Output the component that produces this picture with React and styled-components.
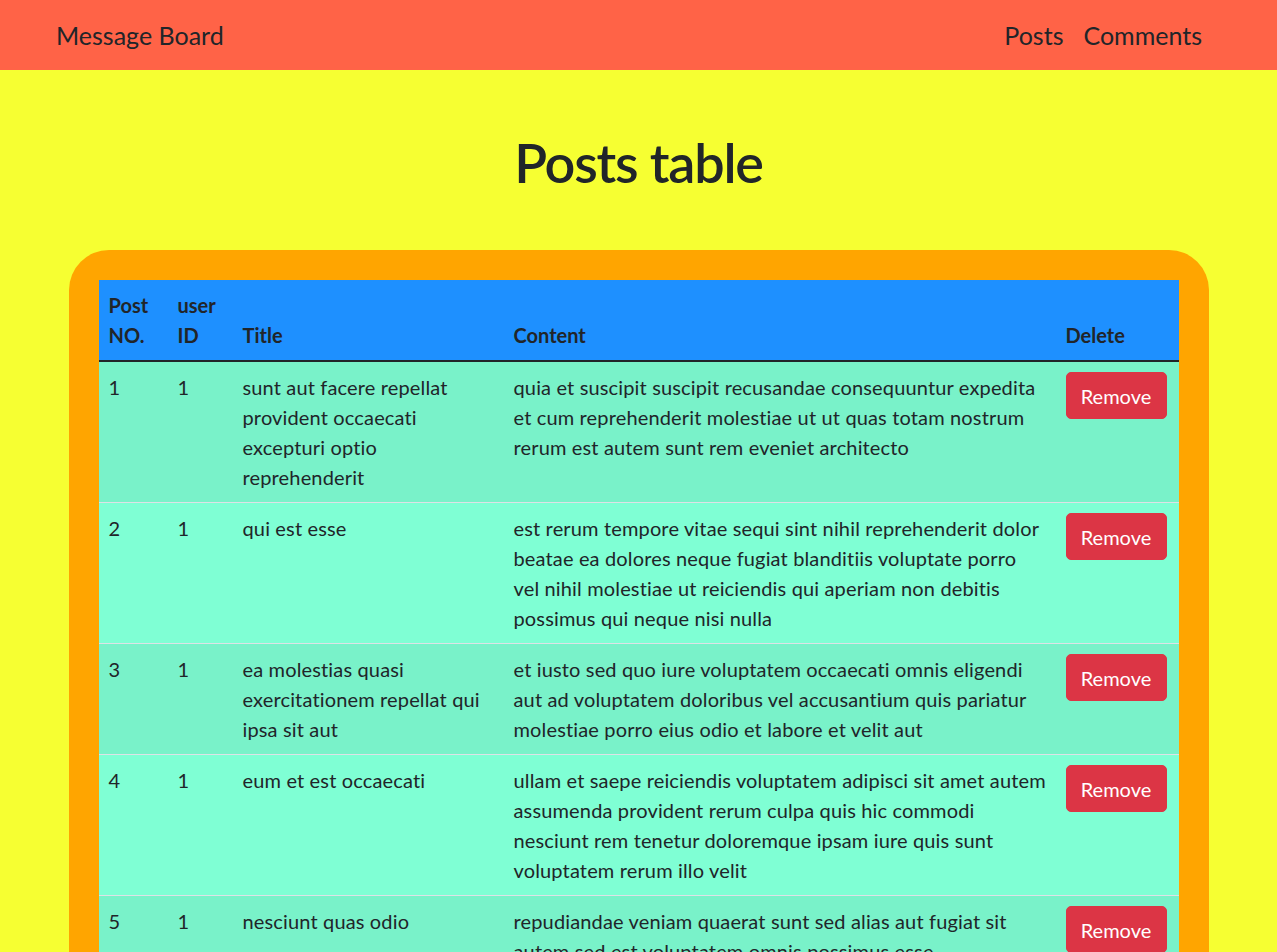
import React from 'react';
import styled, { createGlobalStyle } from 'styled-components';

const GlobalStyle = createGlobalStyle`
  html, body {
    margin: 0;
    padding: 0;
  }
  body {
    background: #f6ff32;
    color: #212529;
    font-family: Lato, "Liberation Sans", sans-serif;
    font-size: 20px;
    line-height: 1.5;
  }
`;

const posts = [
  {
    id: 1,
    userId: 1,
    title: 'sunt aut facere repellat provident occaecati excepturi optio reprehenderit',
    body: 'quia et suscipit suscipit recusandae consequuntur expedita et cum reprehenderit molestiae ut ut quas totam nostrum rerum est autem sunt rem eveniet architecto',
  },
  {
    id: 2,
    userId: 1,
    title: 'qui est esse',
    body: 'est rerum tempore vitae sequi sint nihil reprehenderit dolor beatae ea dolores neque fugiat blanditiis voluptate porro vel nihil molestiae ut reiciendis qui aperiam non debitis possimus qui neque nisi nulla',
  },
  {
    id: 3,
    userId: 1,
    title: 'ea molestias quasi exercitationem repellat qui ipsa sit aut',
    body: 'et iusto sed quo iure voluptatem occaecati omnis eligendi aut ad voluptatem doloribus vel accusantium quis pariatur molestiae porro eius odio et labore et velit aut',
  },
  {
    id: 4,
    userId: 1,
    title: 'eum et est occaecati',
    body: 'ullam et saepe reiciendis voluptatem adipisci sit amet autem assumenda provident rerum culpa quis hic commodi nesciunt rem tenetur doloremque ipsam iure quis sunt voluptatem rerum illo velit',
  },
  {
    id: 5,
    userId: 1,
    title: 'nesciunt quas odio',
    body: 'repudiandae veniam quaerat sunt sed alias aut fugiat sit autem sed est voluptatem omnis possimus esse voluptatibus quis est aut tenetur dolor neque',
  },
  {
    id: 6,
    userId: 1,
    title: 'dolorem eum magni eos aperiam quia',
    body: 'ut aspernatur corporis harum nihil quis provident sequi mollitia nobis aliquid molestiae perspiciatis et ea nemo ab reprehenderit accusantium quas voluptate dolores velit et doloremque molestiae',
  },
];

const Navbar = styled.nav`
  height: 70px;
  background: #ff6347;
  display: flex;
  align-items: center;
  justify-content: space-between;
  padding: 1px 65px 0 56px;
  box-sizing: border-box;
  font-size: 25px;
`;

const Brand = styled.a`
  color: #212529;
  text-decoration: none;
`;

const NavLinks = styled.div`
  display: flex;
`;

const NavLink = styled.a`
  color: #212529;
  text-decoration: none;
  padding: 0 10px;
`;

const Title = styled.h1`
  margin: 60px 0 55px;
  height: 65px;
  text-align: center;
  font-size: 54px;
  font-weight: 600;
  line-height: 65px;
  letter-spacing: -1.2px;
`;

const Frame = styled.div`
  width: 1140px;
  margin: 0 auto;
  box-sizing: border-box;
  padding: 30px;
  background: #ffa500;
  border-radius: 40px;
`;

const Table = styled.table`
  width: 100%;
  border-collapse: collapse;
  table-layout: fixed;
  background: #7fffd4;
`;

const HeadRow = styled.tr`
  background: #1e90ff;
  border-bottom: 2px solid #212529;
`;

const Th = styled.th`
  text-align: left;
  vertical-align: bottom;
  font-weight: 700;
  padding: 10px;
`;

const Row = styled.tr`
  background: ${(p) => (p.striped ? '#79f2c9' : '#7fffd4')};
  border-bottom: 1px solid #dee2e6;
`;

const Td = styled.td`
  vertical-align: top;
  padding: ${(p) => (p.wide ? '10px 9px 10px 10px' : '10px')};
  letter-spacing: 0.15px;
`;

const RemoveButton = styled.button`
  width: 101px;
  height: 47px;
  border: 1px solid #dc3545;
  border-radius: 5px;
  background: #dc3545;
  color: #fff;
  font-family: inherit;
  font-size: 20px;
  line-height: 30px;
  padding: 0;
  cursor: pointer;
`;

export default function App() {
  return (
    <>
      <GlobalStyle />
      <Navbar>
        <Brand href="#">Message Board</Brand>
        <NavLinks>
          <NavLink href="#">Posts</NavLink>
          <NavLink href="#">Comments</NavLink>
        </NavLinks>
      </Navbar>
      <Title>Posts table</Title>
      <Frame>
        <Table>
          <colgroup>
            <col style={{ width: 69 }} />
            <col style={{ width: 65 }} />
            <col style={{ width: 271 }} />
            <col style={{ width: 552 }} />
            <col style={{ width: 123 }} />
          </colgroup>
          <thead>
            <HeadRow>
              <Th>Post NO.</Th>
              <Th>user ID</Th>
              <Th>Title</Th>
              <Th>Content</Th>
              <Th>Delete</Th>
            </HeadRow>
          </thead>
          <tbody>
            {posts.map((post, i) => (
              <Row key={post.id} striped={i % 2 === 0}>
                <Td>{post.id}</Td>
                <Td>{post.userId}</Td>
                <Td>{post.title}</Td>
                <Td wide>{post.body}</Td>
                <Td>
                  <RemoveButton>Remove</RemoveButton>
                </Td>
              </Row>
            ))}
          </tbody>
        </Table>
      </Frame>
    </>
  );
}
